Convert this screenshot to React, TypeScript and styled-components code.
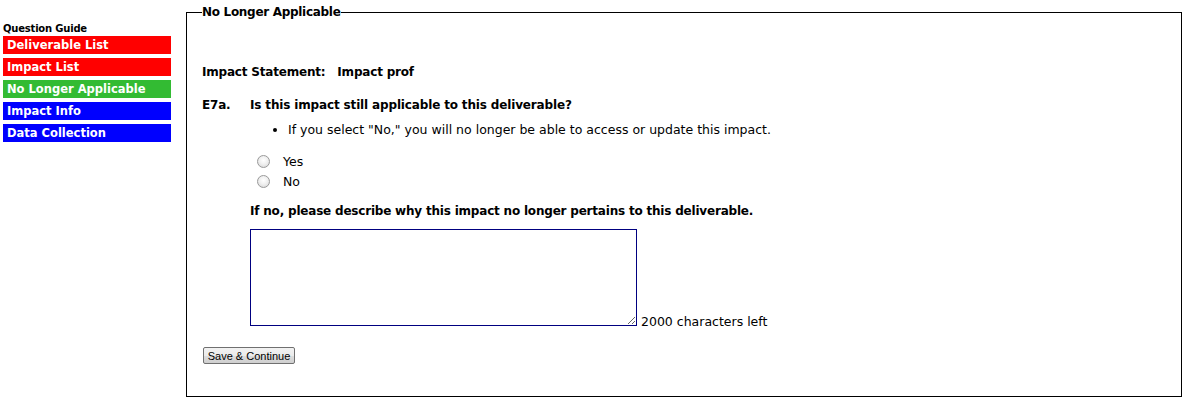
import styled, { createGlobalStyle } from "styled-components";

const GlobalStyle = createGlobalStyle`
  body {
    margin: 0;
    background: #fff;
    font-family: "DejaVu Sans", Verdana, sans-serif;
    color: #000;
  }
`;

const navItems = [
  { label: "Deliverable List", color: "#ff0000" },
  { label: "Impact List", color: "#ff0000" },
  { label: "No Longer Applicable", color: "#33bb33" },
  { label: "Impact Info", color: "#0000ff" },
  { label: "Data Collection", color: "#0000ff" },
];

const App: React.FC = () => {
  return (
    <>
      <GlobalStyle />
      <Page>
        {/* 왼쪽 질문 가이드 */}
        <Sidebar>
          <GuideTitle>Question Guide</GuideTitle>
          {navItems.map((item) => (
            <NavItem key={item.label} $bg={item.color}>
              {item.label}
            </NavItem>
          ))}
        </Sidebar>

        {/* 본문 */}
        <Fieldset>
          <Legend>No Longer Applicable</Legend>
          <StatementRow>
            <span>Impact Statement:</span>
            <span>Impact prof</span>
          </StatementRow>

          <QuestionRow>
            <QuestionNo>E7a.</QuestionNo>
            <QuestionBody>
              <QuestionText>Is this impact still applicable to this deliverable?</QuestionText>
              <Bullets>
                <li>If you select "No," you will no longer be able to access or update this impact.</li>
              </Bullets>
              <RadioGroup>
                <RadioLabel>
                  <Radio type="radio" name="applicable" />
                  Yes
                </RadioLabel>
                <RadioLabel>
                  <Radio type="radio" name="applicable" />
                  No
                </RadioLabel>
              </RadioGroup>
              <DescribeText>If no, please describe why this impact no longer pertains to this deliverable.</DescribeText>
              <TextAreaRow>
                <TextArea />
                <CharsLeft>2000 characters left</CharsLeft>
              </TextAreaRow>
            </QuestionBody>
          </QuestionRow>

          <SaveButton type="button">Save &amp; Continue</SaveButton>
        </Fieldset>
      </Page>
    </>
  );
};

const Page = styled.div`
  display: flex;
  align-items: flex-start;
  padding: 5px 0 0 3px;
  width: 1186px;
  box-sizing: border-box;
`;

// 사이드바
const Sidebar = styled.div`
  width: 168px;
  display: flex;
  flex-direction: column;
  gap: 4px;
  padding-top: 18px;
`;

const GuideTitle = styled.div`
  font-size: 10px;
  font-weight: bold;
  line-height: 12px;
  margin-bottom: -3px;
  letter-spacing: -0.2px;
`;

const NavItem = styled.div<{ $bg: string }>`
  height: 18px;
  line-height: 18px;
  background: ${(p) => p.$bg};
  color: #fff;
  font-size: 11.5px;
  font-weight: bold;
  padding-left: 4px;
`;

// 필드셋
const Fieldset = styled.fieldset`
  margin: 0 0 0 15px;
  width: 996px;
  height: 392px;
  box-sizing: border-box;
  border: 1px solid #000;
  padding: 0 0 0 15px;
  min-width: 0;
`;

const Legend = styled.legend`
  padding: 0 1px 0 0;
  font-size: 12px;
  font-weight: bold;
  letter-spacing: -0.3px;
`;

const StatementRow = styled.div`
  display: flex;
  gap: 12px;
  margin-top: 46px;
  font-size: 12px;
  font-weight: bold;
  letter-spacing: -0.2px;
`;

const QuestionRow = styled.div`
  display: flex;
  margin-top: 19px;
`;

const QuestionNo = styled.div`
  width: 48px;
  font-size: 12px;
  font-weight: bold;
  letter-spacing: -0.2px;
`;

const QuestionBody = styled.div`
  display: flex;
  flex-direction: column;
`;

const QuestionText = styled.div`
  font-size: 12px;
  font-weight: bold;
  letter-spacing: -0.15px;
`;

const Bullets = styled.ul`
  margin: 10px 0 0 0;
  padding-left: 38px;
  font-size: 12.5px;
`;

const RadioGroup = styled.div`
  display: flex;
  flex-direction: column;
  gap: 6px;
  margin-top: 17px;
  padding-left: 7px;
`;

const RadioLabel = styled.label`
  display: flex;
  align-items: center;
  gap: 13px;
  font-size: 12.5px;
  height: 14px;
`;

const Radio = styled.input`
  appearance: none;
  margin: 0;
  width: 13px;
  height: 13px;
  border-radius: 50%;
  border: 1px solid #9a9a9a;
  background: radial-gradient(circle at 50% 40%, #ffffff 0%, #f0f0f0 45%, #d4d4d4 100%);
  box-sizing: border-box;
`;

const DescribeText = styled.div`
  margin-top: 16px;
  font-size: 12px;
  font-weight: bold;
  letter-spacing: -0.2px;
`;

const TextAreaRow = styled.div`
  display: flex;
  align-items: flex-end;
  gap: 4px;
  margin-top: 11px;
`;

const TextArea = styled.textarea`
  width: 387px;
  height: 97px;
  box-sizing: border-box;
  border: 1px solid #000080;
  margin: 0;
  padding: 2px;
  font-family: "DejaVu Sans", sans-serif;
`;

const CharsLeft = styled.span`
  font-size: 12.5px;
  line-height: 14px;
  margin-bottom: -3px;
`;

const SaveButton = styled.button`
  margin-top: 21px;
  width: 92px;
  height: 17px;
  padding: 0;
  margin-left: 1px;
  font-family: "Liberation Sans", Arial, sans-serif;
  font-size: 11px;
  color: #000;
  border: 1px solid #707070;
  border-radius: 2px;
  background: linear-gradient(#f2f2f2 0%, #ebebeb 50%, #dddddd 51%, #cfcfcf 100%);
`;

export default App;
